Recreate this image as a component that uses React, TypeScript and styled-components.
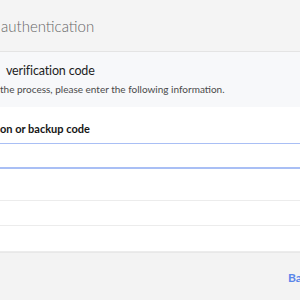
import React from "react";
import styled, { createGlobalStyle } from "styled-components";

const Global = createGlobalStyle`
  html, body { margin: 0; padding: 0; }
  body { width: 300px; height: 300px; overflow: hidden; background: #f3f3f3; font-family: "Lato", "Noto Sans", sans-serif; }
`;

const Page = styled.div`
  width: 300px;
  height: 300px;
  overflow: hidden;
  display: flex;
  flex-direction: column;
`;

const Header = styled.header`
  height: 51px;
  background: #f4f4f4;
  border-bottom: 1px solid #e4e4e4;
  display: flex;
  align-items: center;
  padding-left: 1px;
  box-sizing: content-box;
`;

const Title = styled.h1`
  margin: 0;
  font-size: 15px;
  font-weight: 300;
  color: #666;
  white-space: nowrap;
  line-height: 1;
  padding-top: 1px;
`;

const Intro = styled.section`
  height: 55px;
  background: #f7f8fa;
  display: flex;
  flex-direction: column;
  padding-top: 11px;
  box-sizing: border-box;
`;

const Heading = styled.h2`
  margin: 0 0 0 6px;
  font-size: 12.5px;
  letter-spacing: -0.15px;
  font-weight: 400;
  color: #1e1e1e;
  line-height: 16px;
  white-space: nowrap;
`;

const Sub = styled.p`
  margin: 4px 0 0;
  font-size: 10px;
  color: #4a4a4a;
  line-height: 12px;
  white-space: nowrap;
`;

const Body = styled.div`
  background: #fff;
  display: flex;
  flex-direction: column;
  padding-top: 15px;
`;

const Label = styled.label`
  font-size: 11px;
  font-weight: 700;
  color: #151515;
  line-height: 14px;
  white-space: nowrap;
`;

const Input = styled.input`
  margin-top: 7px;
  height: 26px;
  box-sizing: border-box;
  border: none;
  border-top: 1px solid #a9bff5;
  border-bottom: 2px solid #a9bff5;
  outline: none;
  width: 100%;
  background: #fff;
`;

const Row = styled.div<{ $h: number }>`
  height: ${(p) => p.$h}px;
  border-bottom: 1px solid #ececec;
  box-sizing: border-box;
`;

const Footer = styled.footer`
  flex: 1;
  background: #f3f3f3;
  border-top: 1px solid #e8e8e8;
  display: flex;
  justify-content: flex-end;
  padding-top: 17px;
`;

const BackLink = styled.a`
  width: 12px;
  overflow: hidden;
  font-size: 12px;
  font-weight: 700;
  color: #5a86ea;
  white-space: nowrap;
  text-decoration: none;
  line-height: 16px;
  height: 16px;
`;

export default function App() {
  return (
    <>
      <Global />
      <Page>
        <Header>
          <Title>authentication</Title>
        </Header>
        <Intro>
          <Heading>verification code</Heading>
          <Sub>the process, please enter the following information.</Sub>
        </Intro>
        <Body>
          <Label>on or backup code</Label>
          <Input />
          <Row $h={32} />
          <Row $h={25} />
          <Row $h={26} />
        </Body>
        <Footer>
          <BackLink href="#">Back</BackLink>
        </Footer>
      </Page>
    </>
  );
}
